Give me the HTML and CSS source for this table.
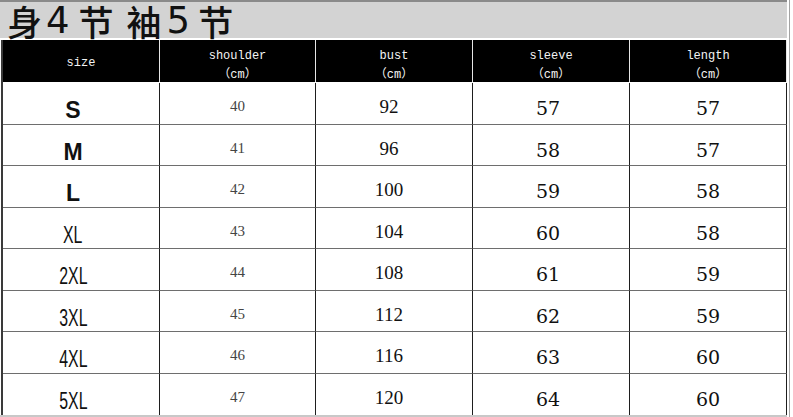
FILE: index.html
```html
<!DOCTYPE html>
<html lang="zh">
<head>
<meta charset="utf-8">
<title>尺码表</title>
<link rel="stylesheet" href="styles.css">
</head>
<body>
<div class="page">
  <div class="main">
    <div class="title-band">
      <h1 class="title"><span class="cjk">身</span><span class="num n1">4</span><span class="cjk">节</span><span class="cjk gap">袖</span><span class="num n2">5</span><span class="cjk">节</span></h1>
    </div>
    <div class="sheet">
      <div class="cell head">size</div>
      <div class="cell head two">shoulder<br>（cm）</div>
      <div class="cell head two">bust<br>（cm）</div>
      <div class="cell head two">sleeve<br>（cm）</div>
      <div class="cell head two">length<br>（cm）</div>

      <div class="cell size bold">S</div><div class="cell sh">40</div><div class="cell bu">92</div><div class="cell sl">57</div><div class="cell le">57</div>
      <div class="cell size bold">M</div><div class="cell sh">41</div><div class="cell bu">96</div><div class="cell sl">58</div><div class="cell le">57</div>
      <div class="cell size bold">L</div><div class="cell sh">42</div><div class="cell bu">100</div><div class="cell sl">59</div><div class="cell le">58</div>
      <div class="cell size"><span class="narrow">XL</span></div><div class="cell sh">43</div><div class="cell bu">104</div><div class="cell sl">60</div><div class="cell le">58</div>
      <div class="cell size"><span class="narrow">2XL</span></div><div class="cell sh">44</div><div class="cell bu">108</div><div class="cell sl">61</div><div class="cell le">59</div>
      <div class="cell size"><span class="narrow">3XL</span></div><div class="cell sh">45</div><div class="cell bu">112</div><div class="cell sl">62</div><div class="cell le">59</div>
      <div class="cell size"><span class="narrow">4XL</span></div><div class="cell sh">46</div><div class="cell bu">116</div><div class="cell sl">63</div><div class="cell le">60</div>
      <div class="cell size last"><span class="narrow">5XL</span></div><div class="cell sh last">47</div><div class="cell bu last">120</div><div class="cell sl last">64</div><div class="cell le last">60</div>
    </div>
    <div class="bottom-strip"></div>
  </div>
  <div class="edge"></div>
</div>
</body>
</html>
```

FILE: styles.css
```css
* { box-sizing: border-box; }
html, body { margin: 0; padding: 0; background: #fff; }
.page {
  width: 793px;
  height: 417px;
  overflow: hidden;
  background: #fff;
  display: flex;
  align-items: stretch;
}
.main {
  width: 787px;
  flex: none;
}
.edge {
  flex: none;
  width: 1px;
  margin-left: 2px;
  background: #a3a3a3;
}
.title-band {
  height: 38px;
  border-top: 2px solid #8a8a8a;
  background: #d3d3d3;
  margin-bottom: 2px;
}
.title {
  margin: 0;
  padding-left: 7px;
  height: 36px;
  font-weight: normal;
  color: #111;
  white-space: nowrap;
  display: flex;
  align-items: center;
}
.title .cjk {
  font-family: "Noto Sans CJK SC", sans-serif;
  font-size: 35px;
  line-height: 36px;
  font-weight: 500;
  margin-top: 1px;
}
.title .num {
  font-family: "DejaVu Sans", sans-serif;
  font-size: 37px;
  line-height: 36px;
  margin-top: 1px;
}
.title .n1 { margin-left: 4px; margin-right: 9px; }
.title .n2 { margin-left: 5px; margin-right: 8px; }
.title .gap { margin-left: 13px; }
.sheet {
  margin-left: 1px;
  border-left: 2px solid #3a3a3a;
  display: grid;
  grid-template-columns: 157px 156px 157px 157px 157px;
  grid-template-rows: 43px repeat(8, 41.5px);
  width: 786px;
}
.cell {
  display: flex;
  align-items: center;
  justify-content: center;
  border-right: 1px solid #1e1e1e;
  border-bottom: 1px solid #6e6e6e;
  color: #111;
  padding-top: 8px;
}
.cell.last { border-bottom: none; }
.head {
  background: #000;
  color: #f4f4f4;
  border-right: 1px solid #e6e6e6;
  border-bottom: 1px solid #fff;
  font-family: "Liberation Mono", "Noto Sans CJK SC", monospace;
  font-size: 12px;
  line-height: 19px;
  text-align: center;
  padding-top: 5px;
}
.head.two { padding-top: 9px; }
.size {
  font-family: "Liberation Sans", Arial, sans-serif;
  font-size: 22px;
  padding-right: 16px;
  padding-top: 14px;
}
.size.bold { font-weight: bold; font-size: 23px; padding-top: 15px; }
.narrow {
  display: inline-block;
  font-family: "Liberation Sans", sans-serif;
  font-size: 24px;
  transform: scaleX(0.66);
}
.sh {
  font-family: "Liberation Serif", serif;
  font-size: 15px;
  color: #444;
  padding-top: 7px;
}
.bu {
  font-family: "Liberation Serif", serif;
  font-size: 19px;
  padding-right: 10px;
  padding-top: 8px;
}
.sl, .le {
  font-family: "DejaVu Serif", serif;
  font-size: 19px;
  padding-top: 10px;
}
.sl { padding-right: 6px; }
.bottom-strip {
  height: 2px;
  background: #c8c8c8;
}
```
